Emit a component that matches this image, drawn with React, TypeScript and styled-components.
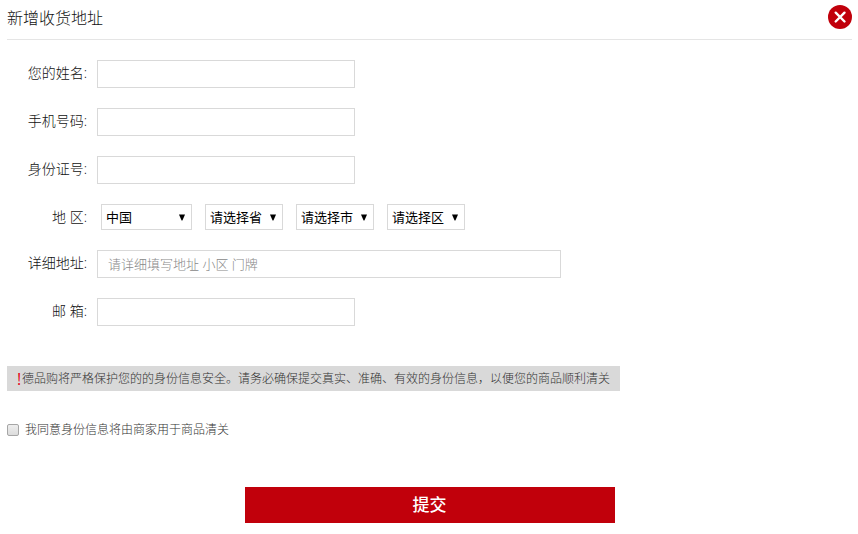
import React from 'react';
import styled, { createGlobalStyle } from 'styled-components';

const GlobalStyle = createGlobalStyle`
  *, *::before, *::after { box-sizing: border-box; }
  body {
    margin: 0;
    background: #fff;
    color: #111;
    font-family: "Open Sans", "Noto Sans CJK SC", sans-serif;
    font-size: 14px;
  }
  button, input, select { font-family: inherit; }
`;

const Page = styled.main`
  padding: 0 6px 10px 7px;
`;

const Header = styled.header`
  display: flex;
  justify-content: space-between;
  align-items: flex-start;
  height: 40px;
  padding-top: 5px;
  border-bottom: 1px solid #e5e5e5;
`;

const Title = styled.h1`
  margin: 0;
  font-size: 16px;
  font-weight: 300;
  line-height: 26px;
`;

const CloseButton = styled.button`
  display: flex;
  width: 24px;
  height: 24px;
  padding: 0;
  border: 0;
  border-radius: 50%;
  background: #c1000b;
  cursor: pointer;
`;

const Fields = styled.div`
  display: flex;
  flex-direction: column;
  gap: 20px;
  padding-top: 20px;
`;

const Row = styled.div`
  display: flex;
`;

const Label = styled.label`
  width: 80px;
  margin-right: 10px;
  font-weight: 300;
  line-height: 26px;
  text-align: right;
`;

const TextInput = styled.input<{ $wide?: boolean }>`
  width: ${(p) => (p.$wide ? 464 : 258)}px;
  height: 28px;
  padding: 0 10px;
  border: 1px solid #d9d9d9;
  border-radius: 0;
  font-size: 13px;
  outline: none;
  &::placeholder { color: #888; font-weight: 300; opacity: 1; }
  &:focus { border-color: #999; }
`;

const Selects = styled.div`
  display: flex;
  gap: 13px;
  padding-left: 4px;
`;

const SelectBox = styled.div<{ $wide?: boolean }>`
  display: grid;
  align-items: center;
  width: ${(p) => (p.$wide ? 91 : 78)}px;
  height: 26px;

  > * { grid-area: 1 / 1; }
  > svg { justify-self: end; margin-right: 7px; pointer-events: none; }
`;

const Select = styled.select`
  appearance: none;
  width: 100%;
  height: 26px;
  padding: 0 16px 0 4px;
  border: 1px solid #d9d9d9;
  border-radius: 0;
  background: #fff;
  color: #000;
  font-size: 13px;
`;

const Notice = styled.p`
  display: flex;
  align-items: center;
  width: fit-content;
  min-height: 25px;
  margin: 40px 0 0;
  padding: 1px 10px 0;
  background: #d9d9d9;
  color: #333;
  font-size: 12px;
  font-weight: 300;
  line-height: 24px;
`;

const Mark = styled.span`
  width: 5px;
  color: #e60012;
  font-size: 16px;
  font-weight: 400;
`;

const Agreement = styled.label`
  display: flex;
  align-items: center;
  gap: 6px;
  width: fit-content;
  margin-top: 29px;
  color: #333;
  font-size: 12px;
  font-weight: 300;
  line-height: 20px;
`;

const Checkbox = styled.input`
  appearance: none;
  width: 12px;
  height: 12px;
  margin: 0;
  border: 1px solid #a6a6a6;
  border-radius: 2px;
  background: linear-gradient(#eee, #dcdcdc);
  &:checked { background: #c1000b; }
`;

const Submit = styled.button`
  display: block;
  width: 370px;
  max-width: 100%;
  height: 36px;
  margin: 47px auto 0;
  padding: 0;
  border: 0;
  background: #c1000b;
  color: #fff;
  font-size: 17px;
  font-weight: 500;
  line-height: 34px;
  cursor: pointer;
`;

const Arrow = () => (
  <svg width="6" height="7" viewBox="0 0 6 7" aria-hidden="true">
    <path d="M0 0.5h6L3.4 6.5h-.8z" fill="#000" />
  </svg>
);

const regions = [
  { id: 'country', text: '中国', wide: true },
  { id: 'province', text: '请选择省' },
  { id: 'city', text: '请选择市' },
  { id: 'district', text: '请选择区' },
];

const Field = ({ id, label, wide, placeholder }: {
  id: string; label: string; wide?: boolean; placeholder?: string;
}) => (
  <Row>
    <Label htmlFor={id}>{label}</Label>
    <TextInput id={id} $wide={wide} placeholder={placeholder} />
  </Row>
);

export default function App() {
  return (
    <>
      <GlobalStyle />
      <Page>
        <Header>
          <Title>新增收货地址</Title>
          <CloseButton type="button" aria-label="关闭">
            <svg width="24" height="24" viewBox="0 0 24 24" aria-hidden="true">
              <path d="M7.7 7.7l8.8 8.8M16.5 7.7l-8.8 8.8" stroke="#fff" strokeWidth="2.4" strokeLinecap="round" />
            </svg>
          </CloseButton>
        </Header>
        <form onSubmit={(e) => e.preventDefault()}>
          <Fields>
            <Field id="name" label="您的姓名:" />
            <Field id="phone" label="手机号码:" />
            <Field id="identity" label="身份证号:" />
            <Row>
              <Label htmlFor="country">地 区:</Label>
              <Selects>
                {regions.map((r) => (
                  <SelectBox key={r.id} $wide={r.wide}>
                    <Select id={r.id} aria-label={r.wide ? undefined : r.text}>
                      <option>{r.text}</option>
                    </Select>
                    <Arrow />
                  </SelectBox>
                ))}
              </Selects>
            </Row>
            <Field id="address" label="详细地址:" wide placeholder="请详细填写地址 小区 门牌" />
            <Field id="email" label="邮 箱:" />
          </Fields>
          <Notice>
            <Mark>!</Mark>
            德品购将严格保护您的的身份信息安全。请务必确保提交真实、准确、有效的身份信息，以便您的商品顺利清关
          </Notice>
          <Agreement>
            <Checkbox type="checkbox" />
            我同意身份信息将由商家用于商品清关
          </Agreement>
          <Submit type="submit">提交</Submit>
        </form>
      </Page>
    </>
  );
}
